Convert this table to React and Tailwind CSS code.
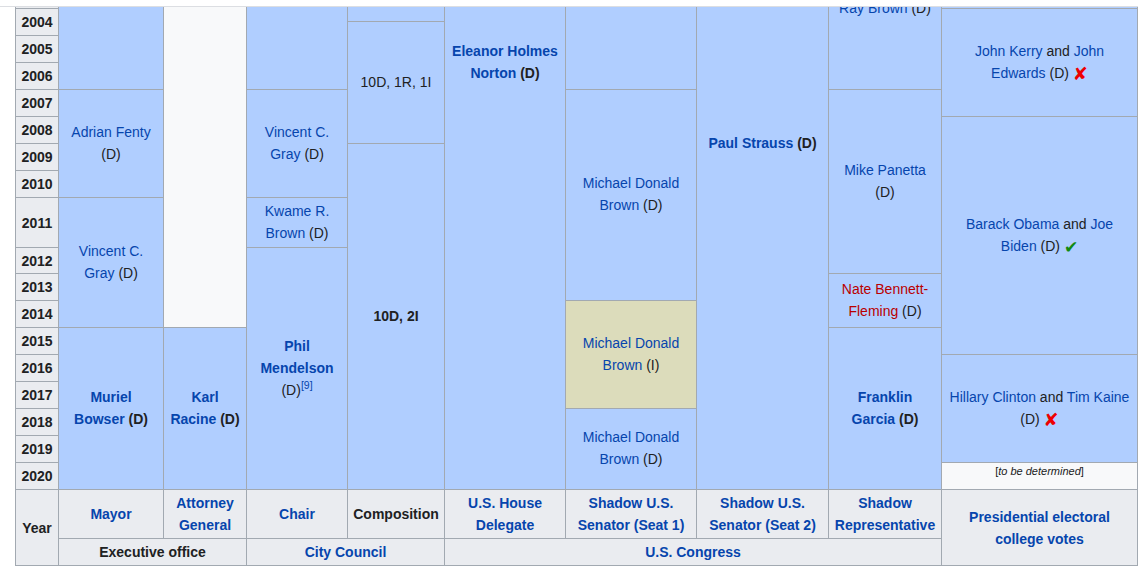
import React from 'react';

const border = 'border-r border-b border-[#a2a9b1]';

function Cell({ className = '', children }) {
  return (
    <div
      className={`flex items-center justify-center text-center px-[6px] overflow-hidden ${border} ${className}`}
    >
      <div>{children}</div>
    </div>
  );
}

function L({ children, bold }) {
  return <span className={`text-[#0645ad] ${bold ? 'font-bold' : ''}`}>{children}</span>;
}

function Red({ children }) {
  return <span className="text-[#ba0000]">{children}</span>;
}

function Lose() {
  return (
    <span className="inline-block align-[-2px] leading-none text-[#ee0000] font-bold italic font-['DejaVu_Sans',sans-serif] text-[18px]">
      ✘
    </span>
  );
}

function Win() {
  return (
    <span className="inline-block align-[-2px] leading-none text-[#108a10] font-['DejaVu_Sans',sans-serif] text-[17px]">
      ✔
    </span>
  );
}

const years = [
  { y: '', cls: 'row-start-1 row-span-1' },
  { y: '2004', cls: 'row-start-2 row-span-2' },
  { y: '2005', cls: 'row-start-4 row-span-1' },
  { y: '2006', cls: 'row-start-5 row-span-1' },
  { y: '2007', cls: 'row-start-6 row-span-1' },
  { y: '2008', cls: 'row-start-7 row-span-1' },
  { y: '2009', cls: 'row-start-8 row-span-1' },
  { y: '2010', cls: 'row-start-9 row-span-1' },
  { y: '2011', cls: 'row-start-10 row-span-1' },
  { y: '2012', cls: 'row-start-11 row-span-1' },
  { y: '2013', cls: 'row-start-12 row-span-1' },
  { y: '2014', cls: 'row-start-13 row-span-1' },
  { y: '2015', cls: 'row-start-14 row-span-1' },
  { y: '2016', cls: 'row-start-15 row-span-1' },
  { y: '2017', cls: 'row-start-16 row-span-1' },
  { y: '2018', cls: 'row-start-17 row-span-1' },
  { y: '2019', cls: 'row-start-18 row-span-1' },
  { y: '2020', cls: 'row-start-19 row-span-1' },
];

const blue = 'bg-[#b0ceff]';
const head = 'bg-[#eaecf0] font-bold';

export default function App() {
  return (
    <div className="relative w-[1145px] h-[577px] bg-white overflow-hidden font-['Liberation_Sans',Arial,sans-serif] text-[14px] leading-[22px] text-[#202122]">
      {/* sticky page header edge */}
      <div className="absolute top-0 left-0 z-10 w-[1138px] h-[7px] bg-white border-b border-[#dcdee2]" />

      <div className="grid ml-[15px] w-[1123px] border-l border-[#a2a9b1] grid-cols-[43px_105px_83px_101px_97px_121px_131px_132px_113px_196px] grid-rows-[9px_13px_14px_27px_27px_27px_27px_27px_27px_50px_26px_27px_27px_27px_27px_27px_27px_27px_27px_49px_27px]">
        {years.map((r) => (
          <Cell key={r.cls} className={`col-start-1 ${r.cls} ${head}`}>
            {r.y}
          </Cell>
        ))}

        {/* Mayor */}
        <Cell className={`col-start-2 row-start-1 row-span-5 ${blue}`} />
        <Cell className={`col-start-2 row-start-6 row-span-4 ${blue} pb-[2px]`}>
          <L>Adrian Fenty</L> (D)
        </Cell>
        <Cell className={`col-start-2 row-start-10 row-span-4 ${blue} pb-[2px]`}>
          <L>Vincent C. Gray</L> (D)
        </Cell>
        <Cell className={`col-start-2 row-start-14 row-span-6 ${blue} font-bold pb-[2px]`}>
          <L>Muriel Bowser</L> (D)
        </Cell>

        {/* Attorney General */}
        <Cell className="col-start-3 row-start-1 row-span-13 bg-[#f8f9fa]" />
        <Cell className={`col-start-3 row-start-14 row-span-6 ${blue} font-bold pb-[2px]`}>
          <L>Karl Racine</L> (D)
        </Cell>

        {/* Council chair */}
        <Cell className={`col-start-4 row-start-1 row-span-5 ${blue}`} />
        <Cell className={`col-start-4 row-start-6 row-span-4 ${blue} pb-[2px]`}>
          <L>Vincent C. Gray</L> (D)
        </Cell>
        <Cell className={`col-start-4 row-start-10 row-span-1 ${blue} pb-[2px]`}>
          <L>Kwame R. Brown</L> (D)
        </Cell>
        <Cell className={`col-start-4 row-start-11 row-span-9 ${blue} pb-[2px]`}>
          <L bold>Phil Mendelson</L> (D)
          <sup className="text-[#0645ad]">[9]</sup>
        </Cell>

        {/* Composition */}
        <Cell className={`col-start-5 row-start-1 row-span-2 ${blue}`} />
        <Cell className={`col-start-5 row-start-3 row-span-5 ${blue} pb-[2px]`}>10D, 1R, 1I</Cell>
        <Cell className={`col-start-5 row-start-8 row-span-12 ${blue} font-bold pb-[2px]`}>10D, 2I</Cell>

        {/* House delegate */}
        <Cell className={`col-start-6 row-start-1 row-span-19 ${blue} font-bold !items-start pt-[40px]`}>
          <L>Eleanor Holmes Norton</L> (D)
        </Cell>

        {/* Shadow senator 1 */}
        <Cell className={`col-start-7 row-start-1 row-span-5 ${blue}`} />
        <Cell className={`col-start-7 row-start-6 row-span-7 ${blue} pb-[2px]`}>
          <L>Michael Donald Brown</L> (D)
        </Cell>
        <Cell className="col-start-7 row-start-13 row-span-4 bg-[#dcdcbb] pb-[2px]">
          <L>Michael Donald Brown</L> (I)
        </Cell>
        <Cell className={`col-start-7 row-start-17 row-span-3 ${blue} pb-[2px]`}>
          <L>Michael Donald Brown</L> (D)
        </Cell>

        {/* Shadow senator 2 */}
        <Cell className={`col-start-8 row-start-1 row-span-19 ${blue} font-bold !items-start pt-[132px]`}>
          <L>Paul Strauss</L> (D)
        </Cell>

        {/* Shadow representative */}
        <Cell className={`col-start-9 row-start-1 row-span-5 ${blue} !items-start`}>
          <div className="-mt-[3px] whitespace-nowrap">
            <L>Ray Brown</L> (D)
          </div>
        </Cell>
        <Cell className={`col-start-9 row-start-6 row-span-6 ${blue} pb-[2px]`}>
          <L>Mike Panetta</L> (D)
        </Cell>
        <Cell className={`col-start-9 row-start-12 row-span-2 ${blue} pb-[2px]`}>
          <Red>Nate Bennett-Fleming</Red> (D)
        </Cell>
        <Cell className={`col-start-9 row-start-14 row-span-6 ${blue} font-bold pb-[2px]`}>
          <L>Franklin Garcia</L> (D)
        </Cell>

        {/* Presidential votes */}
        <Cell className={`col-start-10 row-start-1 row-span-1 ${blue}`} />
        <Cell className={`col-start-10 row-start-2 row-span-5 ${blue} pb-[2px]`}>
          <L>John Kerry</L> and <L>John Edwards</L> (D) <Lose />
        </Cell>
        <Cell className={`col-start-10 row-start-7 row-span-8 ${blue} pb-[2px]`}>
          <L>Barack Obama</L> and <L>Joe Biden</L> (D) <Win />
        </Cell>
        <Cell className={`col-start-10 row-start-15 row-span-4 ${blue} pb-[2px]`}>
          <L>Hillary Clinton</L> and <L>Tim Kaine</L> (D) <Lose />
        </Cell>
        <Cell className="col-start-10 row-start-19 row-span-1 bg-[#f8f9fa] !items-start pt-[1px] text-[11px] leading-[15px]">
          [<i>to be determined</i>]
        </Cell>

        {/* Header rows */}
        <Cell className={`col-start-1 row-start-20 row-span-2 ${head}`}>Year</Cell>
        <Cell className={`col-start-2 row-start-20 row-span-1 ${head}`}><L>Mayor</L></Cell>
        <Cell className={`col-start-3 row-start-20 row-span-1 ${head}`}><L>Attorney General</L></Cell>
        <Cell className={`col-start-4 row-start-20 row-span-1 ${head}`}><L>Chair</L></Cell>
        <Cell className={`col-start-5 row-start-20 row-span-1 ${head} !px-[4px]`}>Composition</Cell>
        <Cell className={`col-start-6 row-start-20 row-span-1 ${head}`}><L>U.S. House Delegate</L></Cell>
        <Cell className={`col-start-7 row-start-20 row-span-1 ${head}`}><L>Shadow U.S. Senator (Seat 1)</L></Cell>
        <Cell className={`col-start-8 row-start-20 row-span-1 ${head}`}><L>Shadow U.S. Senator (Seat 2)</L></Cell>
        <Cell className={`col-start-9 row-start-20 row-span-1 ${head}`}><L>Shadow Representative</L></Cell>
        <Cell className={`col-start-10 row-start-20 row-span-2 ${head}`}><L>Presidential electoral college votes</L></Cell>

        <Cell className={`col-start-2 col-span-2 row-start-21 ${head}`}>Executive office</Cell>
        <Cell className={`col-start-4 col-span-2 row-start-21 ${head}`}><L>City Council</L></Cell>
        <Cell className={`col-start-6 col-span-4 row-start-21 ${head}`}><L>U.S. Congress</L></Cell>
      </div>
    </div>
  );
}
